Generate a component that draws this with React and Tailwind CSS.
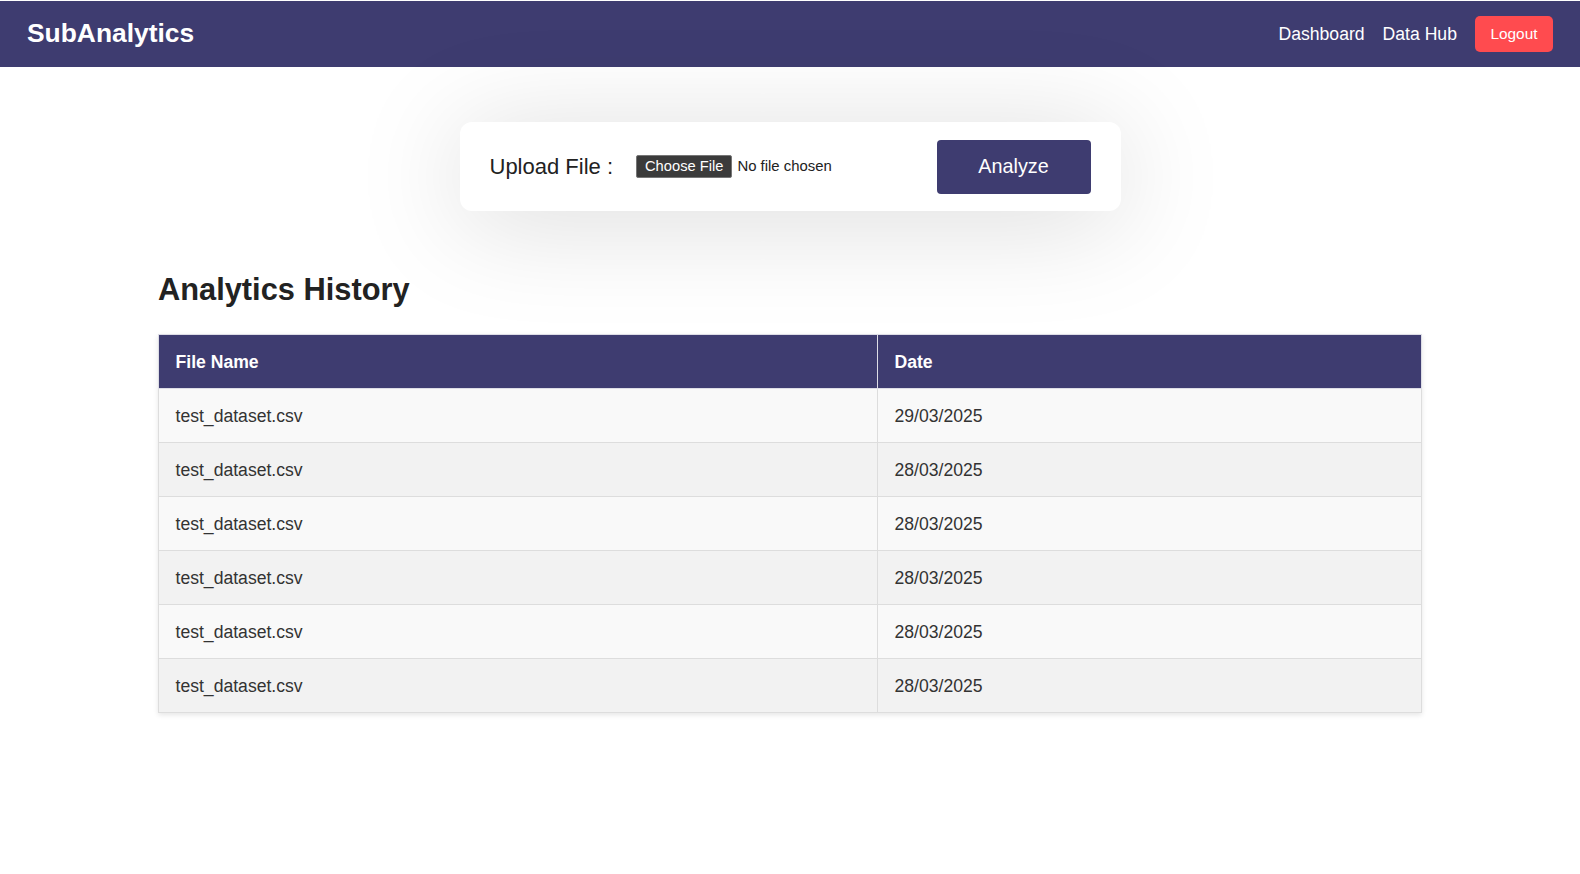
export default function App() {
  const rows = [
    ["test_dataset.csv", "29/03/2025"],
    ["test_dataset.csv", "28/03/2025"],
    ["test_dataset.csv", "28/03/2025"],
    ["test_dataset.csv", "28/03/2025"],
    ["test_dataset.csv", "28/03/2025"],
    ["test_dataset.csv", "28/03/2025"],
  ];
  return (
    <div className="min-h-[874px] bg-white pt-px font-['Liberation_Sans',Arial,sans-serif]">
      <nav className="flex h-[66px] items-center justify-between bg-[#3e3c70] pl-[27px] pr-[27px]">
        <div className="text-[26.4px] font-bold text-white">SubAnalytics</div>
        <div className="flex items-center gap-[18px]">
          <a className="text-[17.6px] text-white">Dashboard</a>
          <a className="text-[17.6px] text-white">Data Hub</a>
          <button className="flex h-[36px] items-center rounded-[5px] bg-[#ff4b4f] px-[15.5px] text-[15.4px] text-white">
            Logout
          </button>
        </div>
      </nav>

      <div className="mx-auto mt-[55px] flex h-[89px] w-[661px] items-center rounded-[12px] bg-white px-[30px] shadow-[0_10px_110px_rgba(0,0,0,0.15)]">
        <span className="text-[22px] text-[#222]">Upload File :</span>
        <div className="ml-[23px] flex items-center gap-[5px]">
          <span className="flex h-[23px] items-center rounded-[2px] border border-[#767676] bg-[#3b3b3b] px-[8px] text-[14.7px] text-white">
            Choose File
          </span>
          <span className="text-[14.9px] text-[#222]">No file chosen</span>
        </div>
        <button className="ml-auto h-[54px] w-[154px] rounded-[4px] bg-[#3e3c70] text-[19.8px] text-white">
          Analyze
        </button>
      </div>

      <div className="mx-auto w-[80%]">
        <h2 className="mt-[61px] text-[30.8px] font-bold leading-[35px] text-[#222]">Analytics History</h2>
        <table className="mt-[27px] w-full table-fixed border-collapse shadow-[0_2px_5px_rgba(0,0,0,0.1)]">
          <thead>
            <tr className="bg-[#3e3c70]">
              <th className="w-[719px] border border-[#dddde6] px-[16.5px] py-[16.5px] text-left text-[17.6px] font-bold leading-[20px] text-white">
                File Name
              </th>
              <th className="border border-[#dddde6] px-[16.5px] py-[16.5px] text-left text-[17.6px] font-bold leading-[20px] text-white">
                Date
              </th>
            </tr>
          </thead>
          <tbody>
            {rows.map((r, i) => (
              <tr key={i} className={i % 2 === 0 ? "bg-[#f9f9f9]" : "bg-[#f2f2f2]"}>
                <td className="border border-[#dddddd] px-[16.5px] py-[16.5px] text-[17.6px] leading-[20px] text-[#333]">{r[0]}</td>
                <td className="border border-[#dddddd] px-[16.5px] py-[16.5px] text-[17.6px] leading-[20px] text-[#333]">{r[1]}</td>
              </tr>
            ))}
          </tbody>
        </table>
      </div>
    </div>
  );
}
